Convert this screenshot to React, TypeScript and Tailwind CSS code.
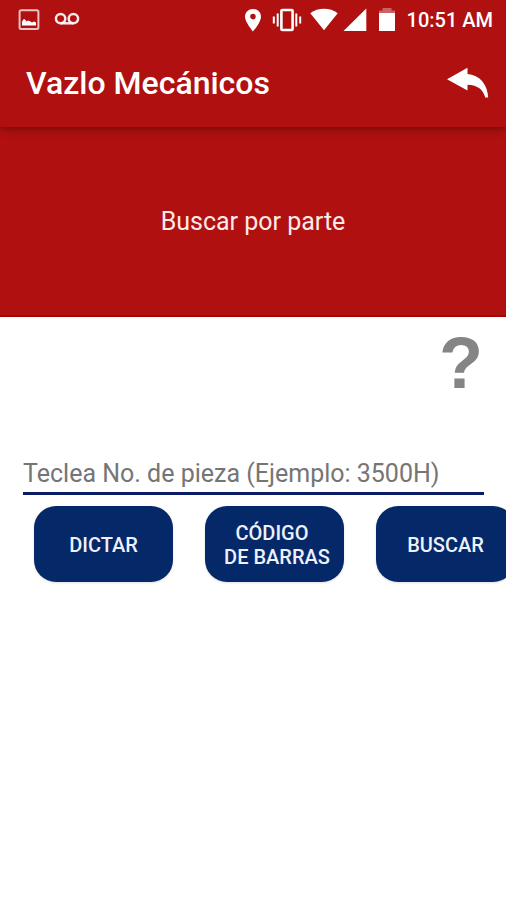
import { useState } from 'react';

const StatusBar = () => (
    <div className="flex h-10 items-center justify-between pl-[18px] pr-[13px] text-white">
        <div className="flex items-center gap-[14px]">
            <svg className="h-[22px] w-[22px]" viewBox="0 0 22 22" fill="none">
                <rect x="1.6" y="1.2" width="18.8" height="18.8" rx="1.5" stroke="currentColor" strokeOpacity="0.75" strokeWidth="2" />
                <path d="M4 16.6V13L5 10.8L6.5 10L8.5 12.4L10 11.6L12 12.2L14 13.6L16 12.6L18 13.6V16.6Z" fill="currentColor" />
            </svg>
            <svg className="h-4 w-[26px]" viewBox="0 0 26 16" fill="none" stroke="currentColor" strokeOpacity="0.9" strokeWidth="2.5">
                <circle cx="6.6" cy="6.6" r="4.7" />
                <circle cx="19.4" cy="6.6" r="4.7" />
                <path d="M6.6 11.3H19.4" />
            </svg>
        </div>
        <div className="flex items-center">
            <svg className="h-6 w-[18px]" viewBox="0 0 18 24" fill="currentColor">
                <path fillRule="evenodd" d="M9 1C4.5 1 1 4.4 1 8.7C1 14.2 9 23.5 9 23.5S17 14.2 17 8.7C17 4.4 13.5 1 9 1ZM9 5.8A2.8 2.8 0 1 1 9 11.4A2.8 2.8 0 0 1 9 5.8Z" />
            </svg>
            <svg className="ml-[10px] h-6 w-[30px]" viewBox="0 0 30 24" fill="none" stroke="currentColor">
                <rect x="9.4" y="2" width="11.2" height="20" rx="1" strokeWidth="2.6" />
                <path d="M5.7 5.5V18.5M24.3 5.5V18.5" strokeWidth="2" />
                <path d="M1.8 8.5V15.5M28.2 8.5V15.5" strokeWidth="2" />
            </svg>
            <svg className="ml-2 h-6 w-7" viewBox="0 0 28 24" fill="currentColor">
                <path d="M14 22.2L0.3 5.3C4.3 2.2 9 0.8 14 0.8S23.7 2.2 27.7 5.3Z" />
            </svg>
            <svg className="ml-[5px] h-6 w-6" viewBox="0 0 24 24" fill="currentColor">
                <path d="M0.5 23L23.3 0.5V23Z" />
            </svg>
            <svg className="ml-3 h-6 w-4" viewBox="0 0 16 24" fill="currentColor">
                <path d="M0 5V2.5H3.5V0H12.5V2.5H16V5Z" fillOpacity="0.35" />
                <path d="M0 5H16V23H0Z" />
            </svg>
            <span className="ml-3 text-xl font-medium leading-6">10:51 AM</span>
        </div>
    </div>
);

const ActionButton = ({ label, onClick }: { label: string; onClick?: () => void }) => (
    <button
        type="button"
        onClick={onClick}
        className="h-[76px] w-[139px] shrink-0 whitespace-pre rounded-[22px] bg-[#052869] pt-[2px] text-center text-xl font-medium leading-6 text-[#eef1fb] shadow-sm"
    >
        {label}
    </button>
);

export default function App() {
    const [part, setPart] = useState('');

    return (
        <div className="min-h-screen overflow-x-hidden bg-white font-[Roboto,sans-serif]">
            <header className="relative bg-[#b01010] shadow-[0_2px_8px_rgba(0,0,0,0.35)]">
                <StatusBar />
                <div className="flex h-[87px] items-center justify-between pb-[2px] pl-[26px] pr-[17px] text-white">
                    <h1 className="text-[32px] font-medium leading-10">Vazlo Mecánicos</h1>
                    <button type="button" aria-label="Regresar">
                        <svg className="h-8 w-[42px]" viewBox="0 0 42 32" fill="currentColor">
                            <path d="M0 12.3L20.5 0.8V7C32.5 8 40.5 17 41.2 30.5H38.3C36 22.5 31 18.3 20.5 17.8V23.6Z" />
                        </svg>
                    </button>
                </div>
            </header>

            <section className="flex h-[190px] items-center justify-center border-b-2 border-[#a60505] bg-[#b01010] pt-[2px]">
                <h2 className="text-[25px] leading-8 text-[#ffe9e9]">Buscar por parte</h2>
            </section>

            <main>
                <div className="flex justify-end pr-[23px] pt-2">
                    <button
                        type="button"
                        aria-label="Ayuda"
                        className="font-['Liberation_Sans',sans-serif] text-[72px] font-bold leading-[76px] text-[#858585]"
                    >
                        ?
                    </button>
                </div>

                <form onSubmit={(e) => e.preventDefault()}>
                    <div className="pl-[23px] pr-[22px] pt-[54px]">
                        <input
                            type="text"
                            aria-label="No. de pieza"
                            value={part}
                            onChange={(e) => setPart(e.target.value)}
                            placeholder="Teclea No. de pieza (Ejemplo: 3500H)"
                            className="h-10 w-full border-b-3 border-[#0a1c66] bg-transparent text-[25px] text-[#444] outline-none placeholder:text-[#757575]"
                        />
                    </div>
                    <div className="flex gap-8 pl-[34px] pt-[11px]">
                        <ActionButton label="DICTAR" />
                        <ActionButton label={'CÓDIGO \n DE BARRAS'} />
                        <ActionButton label="BUSCAR" />
                    </div>
                </form>
            </main>
        </div>
    );
}
